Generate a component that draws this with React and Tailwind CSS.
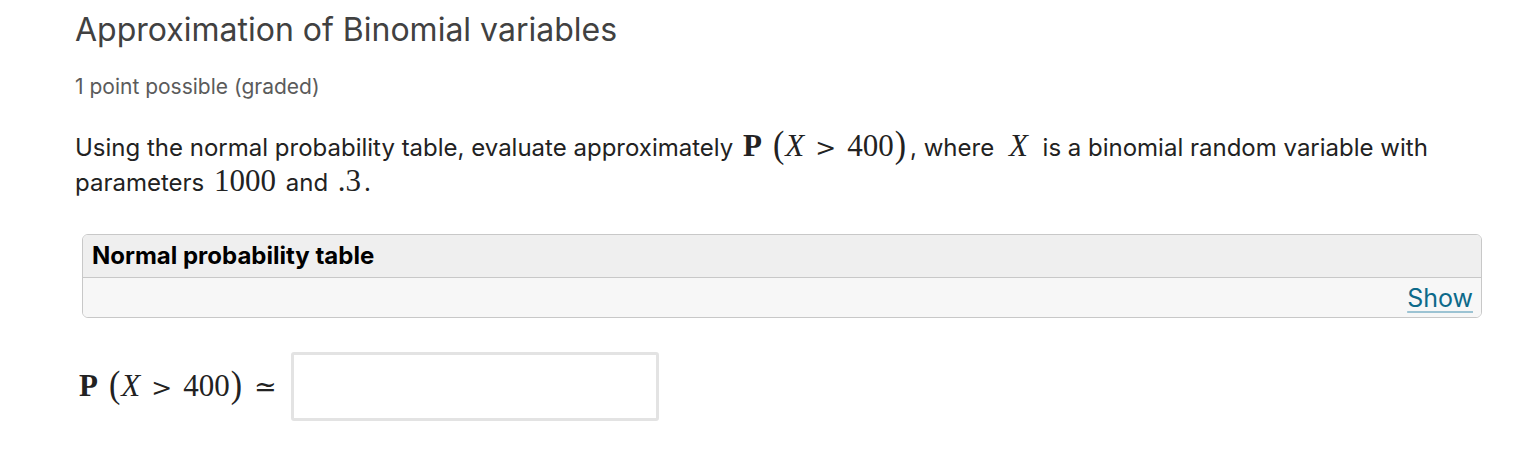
import React from 'react';

// inline math, MathJax-ish
const M = ({ children, className = '' }) => (
    <span className={`inline-block leading-[26px] font-['Liberation_Serif',serif] text-[31px] text-[#222] ${className}`}>{children}</span>
);

const Paren = ({ children, className = '' }) => (
    <span className={`inline-block text-[34px] leading-[26px] scale-y-[1.12] ${className}`}>{children}</span>
);

const Gt = ({ className = '' }) => (
    <span className={`inline-block font-['DejaVu_Serif',serif] text-[25px] leading-[26px] ${className}`}>&gt;</span>
);

const ProbExpr = () => (
    <>
        <b>P</b>
        <span className="inline-block w-[11px]" />
        <Paren className="mr-[1px]">(</Paren>
        <i>X</i>
        <Gt className="mx-[11px]" />
        400
        <Paren className="ml-[1px]">)</Paren>
    </>
);

const App = () => {
    return (
        <div className="min-h-screen bg-white font-['Inter',sans-serif] pl-[75px] pr-[39px] pt-[9px]">
            <h2 className="text-[32px] leading-[42px] text-[#414141] font-normal">
                Approximation of Binomial variables
            </h2>
            <div className="mt-[23px] text-[21px] leading-[26px] text-[#5b5b5b]">
                1 point possible (graded)
            </div>

            <div className="mt-[30px] text-[24px] leading-[35px] text-[#222]">
                <div className="whitespace-nowrap">
                    <span>Using the normal probability table, evaluate approximately </span>
                    <M className="ml-[3px] mr-[4px]">
                        <ProbExpr />
                    </M>
                    <span>, where </span>
                    <M className="mx-[8px]"><i>X</i></M>
                    <span> is a binomial random variable with</span>
                </div>
                <div className="whitespace-nowrap">
                    <span>parameters </span>
                    <M className="mx-[3px]">1000</M>
                    <span> and </span>
                    <M className="mx-[3px]">.3</M>
                    <span>.</span>
                </div>
            </div>

            <div className="mt-[34px] ml-[7px] rounded-[6px] border border-[#c8c8c8] overflow-hidden">
                <div className="bg-[#efefef] border-b border-[#c8c8c8] px-[9px] h-[43px] flex items-center">
                    <span className="text-[24px] font-bold text-black">Normal probability table</span>
                </div>
                <div className="bg-[#f7f7f7] h-[39px] flex items-end justify-end px-[8px] pb-[5px]">
                    <a href="#" className="text-[25px] leading-[28px] text-[#0d6a8a] underline decoration-[#9cc3d3] underline-offset-[4px]">
                        Show
                    </a>
                </div>
            </div>

            <div className="mt-[34px] flex items-center gap-[14px]">
                <span className="font-['Liberation_Serif',serif] text-[31px] leading-[34px] text-[#222] pl-[4px] whitespace-nowrap">
                    <ProbExpr />
                    <span className="inline-block ml-[12px] font-['DejaVu_Serif',serif] text-[27px]">≃</span>
                </span>
                <input type="text" className="w-[368px] h-[69px] border-[3px] border-[#e3e3e3] rounded-[3px] bg-white" />
            </div>
        </div>
    );
};

export default App;
